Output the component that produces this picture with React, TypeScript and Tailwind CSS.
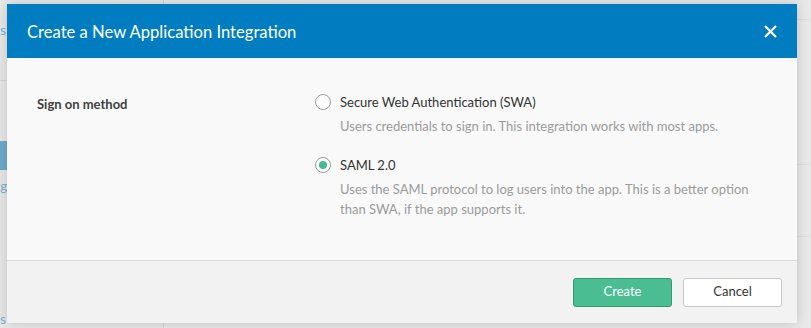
import React, { useState } from 'react';

const font = { fontFamily: 'Lato, "Liberation Sans", sans-serif' };

const options = [
  {
    id: 'swa',
    label: 'Secure Web Authentication (SWA)',
    desc: 'Users credentials to sign in. This integration works with most apps.',
  },
  {
    id: 'saml',
    label: 'SAML 2.0',
    desc: 'Uses the SAML protocol to log users into the app. This is a better option than SWA, if the app supports it.',
  },
];

export default function App() {
  const [method, setMethod] = useState('saml');

  return (
    <div className="relative w-[811px] h-[328px] overflow-hidden bg-[#e9e9e9]" style={font}>
      {/* page behind the overlay */}
      <div className="flex h-full">
        <aside className="w-[164px] border-r border-[#d6d6d6] flex flex-col text-[14px] leading-[16px] text-[#7fb1cf]">
          <div className="h-[22px]" />
          <div className="h-[16px]">si</div>
          <div className="h-[42px]" />
          <div className="border-t border-[#d9d9d9]" />
          <div className="h-[60px]" />
          <div className="h-[29px] bg-[#6faacb]" />
          <div className="h-[8px]" />
          <div className="h-[16px]">ge</div>
          <div className="h-[117px]" />
          <div className="h-[16px]">s</div>
        </aside>
        <div className="flex-1 flex flex-col">
          <div className="h-[20px] border-b border-[#dedede]" />
          <div className="h-[145px] border-b border-[#dedede]" />
          <div className="h-[72px] border-b border-[#dedede]" />
        </div>
      </div>

      {/* modal */}
      <div className="absolute left-[7px] top-[4px] w-[790px] h-[319px] flex flex-col shadow-[0_0_12px_rgba(0,0,0,0.18)]">
        <div className="h-[54px] bg-[#007dc1] flex items-center justify-between pl-[20px] pr-[20px]">
          <h1 className="text-white text-[16.6px] leading-none pt-[2px]">Create a New Application Integration</h1>
          <button className="text-white w-[14px] h-[14px] flex items-center justify-center">
            <svg width="13" height="13" viewBox="0 0 13 13">
              <path d="M1 1L12 12M12 1L1 12" stroke="#fff" strokeWidth="2.2" />
            </svg>
          </button>
        </div>

        <div className="flex-1 bg-[#f9f9f9] border-b border-[#dadada] flex pt-[34px] pl-[30px]">
          <div className="w-[278px] text-[13px] font-bold text-[#404040] pt-[3px]">Sign on method</div>
          <div className="flex flex-col gap-[19px]">
            {options.map((o) => {
              const checked = method === o.id;
              return (
                <label key={o.id} className="flex gap-[9px] cursor-pointer" onClick={() => setMethod(o.id)}>
                  <span className="mt-[2px] w-[16px] h-[16px] rounded-full border border-[#9a9a9a] bg-white flex items-center justify-center shrink-0">
                    {checked && <span className="w-[8px] h-[8px] rounded-full bg-[#45bb8f]" />}
                  </span>
                  <div className="flex flex-col">
                    <span className="text-[13px] text-[#333] leading-[20px]">{o.label}</span>
                    <span className="mt-[4px] w-[412px] text-[13px] text-[#9b9b9b] leading-[20px]">{o.desc}</span>
                  </div>
                </label>
              );
            })}
          </div>
        </div>

        <div className="h-[62px] bg-[#f2f2f2] flex items-center justify-end gap-[11px] pr-[15px]">
          <button className="w-[99px] h-[29px] rounded-[3px] bg-[#4abd93] border border-[#2f9a72] text-white text-[13px]">
            Create
          </button>
          <button className="w-[99px] h-[29px] rounded-[3px] bg-white border border-[#c8c8c8] text-[#333] text-[13px]">
            Cancel
          </button>
        </div>
      </div>
    </div>
  );
}
